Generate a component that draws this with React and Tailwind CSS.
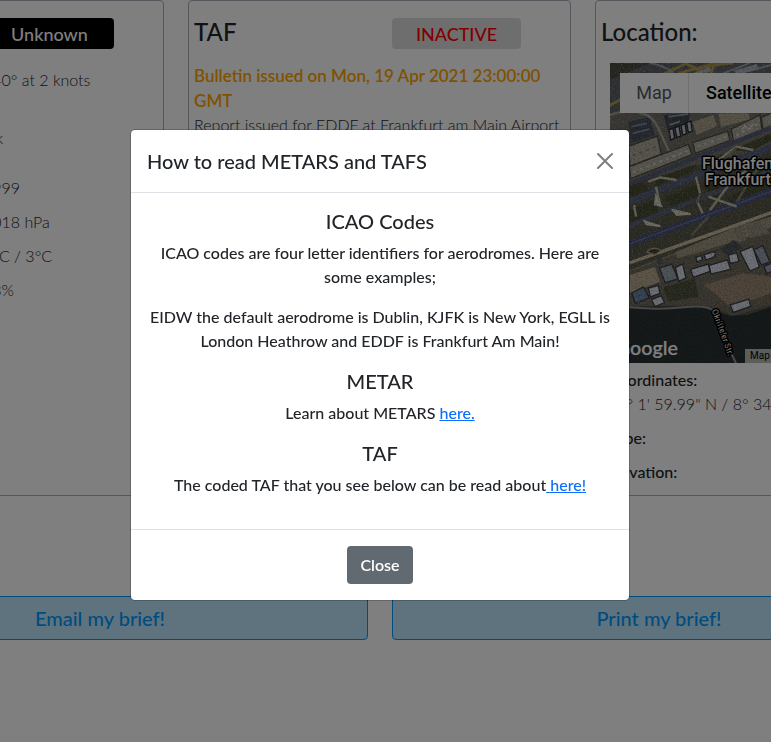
import React from "react";

const weather = [
  { label: "Wind:", value: "240° at 2 knots", row: "h-12" },
  { label: "Clouds:", value: "Ok", row: "h-10" },
  { label: "Visibility:", value: "9999", row: "h-6" },
  { label: "Pressure:", value: "1018 hPa", row: "h-6" },
  { label: "Temp / Dew:", value: "7°C / 3°C", row: "h-6" },
  { label: "Humidity:", value: "73%", row: "h-6" },
];

function Card({ children }) {
  return (
    <section className="h-[496px] w-[383px] shrink-0 rounded border border-[#a9afb8] px-[5px] pt-[17px]">
      {children}
    </section>
  );
}

function CardHeader({ title, badge, tone }) {
  return (
    <div className="flex">
      <h2 className="w-[198px] text-2xl leading-7">{title}</h2>
      {badge && (
        <span className={`flex h-[31px] w-[129px] items-center justify-center rounded text-lg leading-6 ${tone}`}>
          {badge}
        </span>
      )}
    </div>
  );
}

function Aerial() {
  return (
    <svg className="absolute inset-0 h-full w-full" viewBox="0 0 353 300" preserveAspectRatio="xMinYMin slice" aria-hidden="true">
      <defs>
        <filter id="grain" x="0" y="0" width="100%" height="100%">
          <feTurbulence type="fractalNoise" baseFrequency="0.22" numOctaves="3" seed="8" />
          <feColorMatrix type="matrix" values="0 0 0 0 0  0 0 0 0 0  0 0 0 0 0  1.6 0 0 0 -0.6" />
        </filter>
        <filter id="specks" x="0" y="0" width="100%" height="100%">
          <feTurbulence type="fractalNoise" baseFrequency="0.3" numOctaves="2" seed="3" />
          <feColorMatrix type="matrix" values="0 0 0 0 .75  0 0 0 0 .75  0 0 0 0 .72  4 0 0 0 -2.2" />
        </filter>
        <path id="street" d="M335 752C350 790 366 835 386 892L400 932" />
      </defs>
      <g transform="translate(-10 -3) scale(.33333)">
        <rect width="1120" height="930" fill="#5b5b4d" />
        {/* town blocks and motorway */}
        <path d="M0 0H1120V180H0Z" fill="#62656a" />
        <path d="M30 60L150 9H30Z" fill="#505044" />
        <path d="M25 138L75 112M165 55L262 9M235 40L350 9M260 12L330 45L345 12M285 42C300 20 330 14 400 9" stroke="#b39e55" strokeWidth="9" fill="none" />
        <path d="M150 9Q205 20 225 45M330 55L450 9M380 50L513 15" stroke="#a3a5a5" strokeWidth="6" fill="none" />
        <path d="M285 38L330 20L334 34L296 42ZM400 32L470 12L476 28L415 42Z" fill="#aeb7c0" />
        <path d="M30 160H513V260L88 370L30 300Z" fill="#77736a" />
        <path d="M85 185L150 170L165 225L92 250Z" fill="#4b5260" />
        <path d="M95 200L140 190M98 220L150 207" stroke="#8a9099" strokeWidth="5" />
        <path d="M30 165Q140 130 175 205T210 280" stroke="#adab9f" strokeWidth="7" fill="none" />
        <path d="M190 165L270 158L265 190L205 215Z" fill="#424950" />
        <path d="M205 170L265 162M208 195L240 184" stroke="#8c99ab" strokeWidth="6" />
        {/* terminal piers */}
        <g fill="#c2cad6" stroke="#22252b" strokeWidth="4">
          <path d="M207 210l12-5 5 30-12 5zM225 203l12-5 5 30-12 5zM243 196l12-5 5 30-12 5zM260 188l12-5 5 30-12 5z" />
        </g>
        <path d="M278 186L340 165L352 198L290 225ZM355 160H445L450 178L363 202Z" fill="#b3a991" />
        {/* aprons */}
        <g fill="#b3ae9f" stroke="#4e4f45" strokeWidth="4">
          <path d="M86 258L172 228L184 282L90 318Z" />
          <path d="M88 320L265 253L276 284L92 356Z" />
          <path d="M278 248L383 213L390 241L286 280Z" />
          <path d="M394 207L480 165L486 211L401 246Z" />
          <path d="M484 172L525 155V200L490 212Z" />
        </g>
        <g stroke="#d8d4c4" strokeWidth="6" strokeDasharray="9 12" fill="none">
          <path d="M100 336L262 273M293 260L380 229M409 226L476 190" />
          <path d="M98 286L170 260" stroke="#8d8b80" />
        </g>
        <path d="M425 212l10-16 10 12 16-16" stroke="#dcdcd4" strokeWidth="4" fill="none" />
        {/* grass islands */}
        <g fill="#4b4f36">
          <path d="M90 378Q130 350 145 390L90 412ZM165 358L265 320Q310 305 270 338L170 378ZM305 314L368 282L385 285L345 310Z" />
          <path d="M395 270L513 220V242L450 275ZM90 450L160 420L180 460L90 500ZM190 415L290 372L300 430L225 450ZM310 380L440 330L345 420ZM380 415L513 340V390L400 438Z" />
        </g>
        {/* runways and taxiways */}
        <g fill="none">
          <path d="M88 372L530 196" stroke="#56607a" strokeWidth="13" />
          <path d="M88 425L530 255" stroke="#58637f" strokeWidth="19" />
          <path d="M88 498L530 326" stroke="#5b6375" strokeWidth="15" />
          <path d="M88 552L530 388" stroke="#4c557e" strokeWidth="21" />
          <path d="M88 552L530 388" stroke="#9099b6" strokeWidth="2" />
          <g stroke="#cbc6b0" strokeWidth="7">
            <path d="M145 365L180 352L230 360M168 380L182 440M288 350L300 400M292 425L308 460M330 450L390 370L440 330M325 410L410 440M215 450L270 463M135 490L180 498M102 435L108 470M355 300L410 260L460 270" />
            <path d="M380 290L410 262M300 400L290 430M470 330L410 425M275 525L325 470" stroke="#8a8671" />
          </g>
          <path d="M88 609L320 527L530 452" stroke="#cfc4a5" strokeWidth="10" />
          <path d="M88 634L285 558L530 474" stroke="#8f8974" strokeWidth="5" />
        </g>
        <path d="M217 449l56 13-43 4zM132 482l50 17-42-5zM167 405l18 34-21-5z" fill="#dcdac9" stroke="#dcdac9" strokeWidth="4" />
        {/* cargo area */}
        <path d="M88 635L290 560L530 472V730L400 767L340 745L300 735L88 740Z" fill="#736d5f" />
        <path d="M225 577L410 500L530 465V495L420 540L232 595Z" fill="#a59b84" />
        <path d="M400 508L430 495L440 540L415 548ZM438 500L480 482L510 520L450 535Z" fill="#988f80" />
        <path d="M90 645L165 621L180 665L90 700Z" fill="#bdad93" />
        <path d="M310 675L430 640L513 650V700L390 742L345 700Z" fill="#a08c76" />
        <path d="M190 682L285 655L295 710L205 725Z" fill="#50543f" />
        <g fill="#dde3ee" stroke="#3a3e47" strokeWidth="4">
          <path d="M178 624L215 612L234 657L196 668Z" fill="#a0a9b7" />
          <path d="M226 623L248 612L258 654L236 663Z" />
          <path d="M272 628L325 612L330 634L280 652ZM327 616L382 600L392 628L333 642Z" />
          <path d="M420 575L458 559L478 621L450 633Z" />
          <path d="M462 570L488 556L510 606L484 615ZM492 618L520 608V632L500 641Z" fill="#9ca6b6" />
          <path d="M385 585L410 578L417 604L391 610ZM312 584L347 574L344 590L318 600ZM288 592l15-5 5 13-17 6z" />
          <path d="M95 699L130 681L148 714L106 730Z" fill="#6d88ab" />
          <path d="M145 684L175 676L180 700L151 711ZM155 719L184 707L194 728L165 740Z" />
          <path d="M390 735L446 717L452 739L400 757Z" />
        </g>
        <path d="M360 568L400 540L430 565L380 585Z" fill="#4e535c" />
        <path d="M140 576q20-20 44-4l-20 12z" fill="#3d4036" stroke="#b3a582" strokeWidth="4" />
        <circle cx="178" cy="602" r="8" fill="#4b5b6a" />
        {/* woods */}
        <path d="M0 740H230L300 737L340 750L390 768L440 765L530 735H1120V930H0Z" fill="#2c3537" />
        <rect width="1120" height="930" filter="url(#grain)" opacity=".3" />
        <rect width="1120" height="735" filter="url(#specks)" opacity=".25" />
        <path d="M88 742Q180 750 250 742T340 752Q360 770 365 800T408 910" stroke="#8f9391" strokeWidth="6" fill="none" />
        <text fontFamily="Roboto, sans-serif" fontSize="25" fontWeight="400" fill="#f0f0f0" stroke="#000" strokeWidth="9" strokeLinejoin="round" paintOrder="stroke">
          <textPath href="#street">Okrifteler Str.</textPath>
        </text>
        <g fontFamily="Roboto, sans-serif" fontSize="48" fontWeight="500" fill="#fff" stroke="#000" strokeWidth="9" strokeLinejoin="round" paintOrder="stroke">
          <text x="306" y="327">Flughafen</text>
          <text x="315" y="375">Frankfurt</text>
        </g>
        <text x="234" y="885" textAnchor="end" fontFamily="Lato, sans-serif" fontSize="59" fontWeight="600" fill="#fff" stroke="#555" strokeWidth="2" paintOrder="stroke">Google</text>
      </g>
    </svg>
  );
}

function LocationMap() {
  return (
    <div className="relative h-[300px] overflow-hidden">
      <Aerial />
      <div className="absolute top-[10px] left-[10px] flex font-[Roboto,sans-serif] text-lg">
        <button type="button" className="h-10 w-[68px] bg-white font-normal text-[#565656]">Map</button>
        <button type="button" className="h-10 border-l border-[#e0e0e0] bg-white px-[17px] font-medium text-black">Satellite</button>
      </div>
      <span className="absolute bottom-0 left-[135px] h-[14px] bg-[#f5f5f5]/70 px-[5px] font-[Roboto,sans-serif] text-[10px] leading-[14px] font-normal text-black">
        Map data ©2021 Imagery ©2021
      </span>
    </div>
  );
}

function Dashboard() {
  return (
    <main className="min-h-screen overflow-hidden bg-white pr-3">
      <div className="flex justify-center gap-6">
        <Card>
          <CardHeader title="METAR" badge="Unknown" tone="bg-black text-white" />
          <dl className="mt-[19px] flex flex-col gap-[10px]">
            {weather.map((item) => (
              <div key={item.label} className={`flex ${item.row}`}>
                <dt className="w-[196px]">{item.label}</dt>
                <dd className="font-light">{item.value}</dd>
              </div>
            ))}
          </dl>
        </Card>
        <Card>
          <CardHeader title="TAF" badge="INACTIVE" tone="bg-[#dcdcdc] text-[#ff0000]" />
          <p className="mt-[14px] text-[17px] leading-[25px] font-semibold text-[#ffa500]">
            Bulletin issued on Mon, 19 Apr 2021 23:00:00 GMT
          </p>
          <p className="font-light">Report issued for EDDF at Frankfurt am Main Airport</p>
        </Card>
        <Card>
          <CardHeader title="Location:" />
          <div className="mt-[17px] px-[9px]">
            <LocationMap />
            <dl className="-ml-[2px] mt-[5px]">
              <dt>Coordinates:</dt>
              <dd className="font-light">50° 1' 59.99" N / 8° 34' 13.64" E</dd>
              <dt className="mt-[10px]">Type:</dt>
              <dt className="mt-[10px]">Elevation:</dt>
            </dl>
          </div>
        </Card>
      </div>
      <div className="mt-[100px] flex justify-center gap-6 text-xl text-[#0098ff]">
        <button type="button" className="h-11 w-[535px] shrink-0 rounded border border-[#0098ff] bg-[#bfe6ff]">Email my brief!</button>
        <button type="button" className="h-11 w-[535px] shrink-0 rounded border border-[#0098ff] bg-[#bfe6ff]">Print my brief!</button>
      </div>
    </main>
  );
}

function HelpModal() {
  return (
    <div className="fixed inset-0 flex items-start justify-center bg-black/50 pt-[129px] pr-[11px]">
      <div role="dialog" aria-modal="true" aria-labelledby="help-title" className="w-[500px] rounded-[5px] border border-black/20 bg-white bg-clip-padding">
        <header className="flex items-center justify-between border-b border-[#dee2e6] p-4">
          <h1 id="help-title" className="text-xl leading-[30px]">How to read METARS and TAFS</h1>
          <button type="button" aria-label="Close dialog" className="opacity-50">
            <svg className="size-4" viewBox="0 0 16 16" fill="#000" aria-hidden="true">
              <path d="M.293.293a1 1 0 011.414 0L8 6.586 14.293.293a1 1 0 111.414 1.414L9.414 8l6.293 6.293a1 1 0 01-1.414 1.414L8 9.414l-6.293 6.293a1 1 0 01-1.414-1.414L6.586 8 .293 1.707a1 1 0 010-1.414z" />
            </svg>
          </button>
        </header>
        <div className="p-4 text-center">
          <h2 className="mb-2 text-xl leading-6">ICAO Codes</h2>
          <p className="mb-4">ICAO codes are four letter identifiers for aerodromes. Here are some examples;</p>
          <p className="mb-4">EIDW the default aerodrome is Dublin, KJFK is New York, EGLL is London Heathrow and EDDF is Frankfurt Am Main!</p>
          <h2 className="mb-2 text-xl leading-6">METAR</h2>
          <p className="mb-4">
            Learn about METARS <a href="#metar" className="text-[#0d6efd] underline">here.</a>
          </p>
          <h2 className="mb-2 text-xl leading-6">TAF</h2>
          <p className="mb-4">
            The coded TAF that you see below can be read about<a href="#taf" className="text-[#0d6efd] underline"> here!</a>
          </p>
        </div>
        <footer className="flex justify-center border-t border-[#dee2e6] p-4">
          <button type="button" className="h-[38px] rounded bg-[#616971] px-[13px] font-semibold text-white">Close</button>
        </footer>
      </div>
    </div>
  );
}

export default function App() {
  return (
    <div className="font-[Lato,sans-serif] text-base font-medium text-[#212529]">
      <Dashboard />
      <HelpModal />
    </div>
  );
}
